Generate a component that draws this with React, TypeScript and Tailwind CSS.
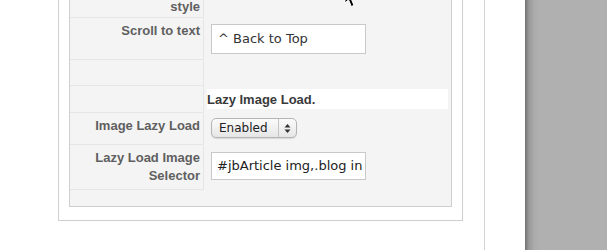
import React from "react";

const labelFont = { fontFamily: '"Liberation Sans", Arial, sans-serif' };
const inputFont = { fontFamily: '"DejaVu Sans", "Lucida Grande", sans-serif' };

function LabelCell({ h, children, end }: { h: string; children?: React.ReactNode; end?: boolean }) {
  return (
    <div
      className={`w-[134px] shrink-0 border-r border-b border-[#e6e6e6] bg-[#f4f4f4] text-right pr-[3px] text-[13px] font-bold text-[#5f5f5f] ${h} ${end ? "flex flex-col justify-end pb-[4px] leading-[13px]" : "pt-[4px] leading-[18px]"}`}
      style={labelFont}
    >
      {children}
    </div>
  );
}

export default function App() {
  return (
    <div className="w-[607px] h-[250px] overflow-hidden bg-white flex relative">
      {/* main column */}
      <div className="w-[485px] h-[250px] border-r border-[#d4d4d4] shrink-0">
        <div className="ml-[58px] w-[405px] h-[221px] border border-t-0 border-[#cfcfcf] pl-[10px] pr-[10px]">
          <div className="w-[383px] h-[207px] border border-t-0 border-[#cfcfcf] bg-[#f4f4f4] flex flex-col">
            {/* row 1 */}
            <div className="flex">
              <LabelCell h="h-[18px]" end>
                style
              </LabelCell>
              <div className="flex-1" />
            </div>
            {/* row 2 */}
            <div className="flex">
              <LabelCell h="h-[42px]">Scroll to text</LabelCell>
              <div className="flex-1 pl-[7px] pt-[6px]">
                <div
                  className="w-[155px] h-[30px] bg-white border border-[#c9c9c9] pl-[6px] flex items-center text-[13px] text-[#333]"
                  style={inputFont}
                >
                  ^ Back to Top
                </div>
              </div>
            </div>
            {/* row 3 */}
            <div className="flex">
              <LabelCell h="h-[26px]" />
              <div className="flex-1" />
            </div>
            {/* row 4 header */}
            <div className="flex">
              <LabelCell h="h-[27px]" />
              <div className="flex-1 pl-[3px] pr-[3px] pt-[3px]">
                <div
                  className="h-[20px] bg-white text-[13px] font-bold text-[#3a3a3a] leading-[20px] pt-[1px]"
                  style={labelFont}
                >
                  Lazy Image Load.
                </div>
              </div>
            </div>
            {/* row 5 */}
            <div className="flex">
              <LabelCell h="h-[32px]">Image Lazy Load</LabelCell>
              <div className="flex-1 pl-[7px] pt-[5px]">
                <div className="w-[86px] h-[20px] rounded-[5px] border border-[#b5b5b5] bg-[linear-gradient(to_bottom,#fbfbfb,#e6e6e6)] shadow-[0_1px_1px_rgba(0,0,0,0.12)] flex items-center">
                  <div className="flex-1 pl-[7px] text-[12px] text-[#222] leading-[18px]" style={inputFont}>
                    Enabled
                  </div>
                  <div className="w-[18px] h-[18px] border-l border-[#c4c4c4] flex items-center justify-center">
                    <svg width="7" height="11" viewBox="0 0 7 11">
                      <path d="M3.5 1 L6.5 4.5 L0.5 4.5 Z" fill="#333" />
                      <path d="M3.5 10 L6.5 6.5 L0.5 6.5 Z" fill="#333" />
                    </svg>
                  </div>
                </div>
              </div>
            </div>
            {/* row 6 */}
            <div className="flex">
              <LabelCell h="h-[45px]">
                Lazy Load Image
                <br />
                Selector
              </LabelCell>
              <div className="flex-1 pl-[7px] pt-[7px]">
                <div
                  className="w-[155px] h-[28px] bg-white border border-[#c9c9c9] pl-[5px] flex items-center text-[13px] text-[#222] overflow-hidden whitespace-nowrap"
                  style={inputFont}
                >
                  #jbArticle img,.blog in
                </div>
              </div>
            </div>
          </div>
        </div>
      </div>
      {/* white gap */}
      <div className="w-[40px] shrink-0 bg-white" />
      {/* gray side */}
      <div className="flex-1 bg-[linear-gradient(to_right,#727272,#9a9a9a_4px,#acacac_10px,#b0b0b0_16px)]" />

      {/* mouse cursor */}
      <svg className="absolute left-[344px] top-[-12px]" width="20" height="22" viewBox="0 0 20 22">
        <path d="M1 1 L1 15 L4.5 11.8 L7.3 18.5 L10 17.4 L7.3 11 L12 11 Z" fill="#000" stroke="#fff" strokeWidth="1" />
      </svg>
    </div>
  );
}
